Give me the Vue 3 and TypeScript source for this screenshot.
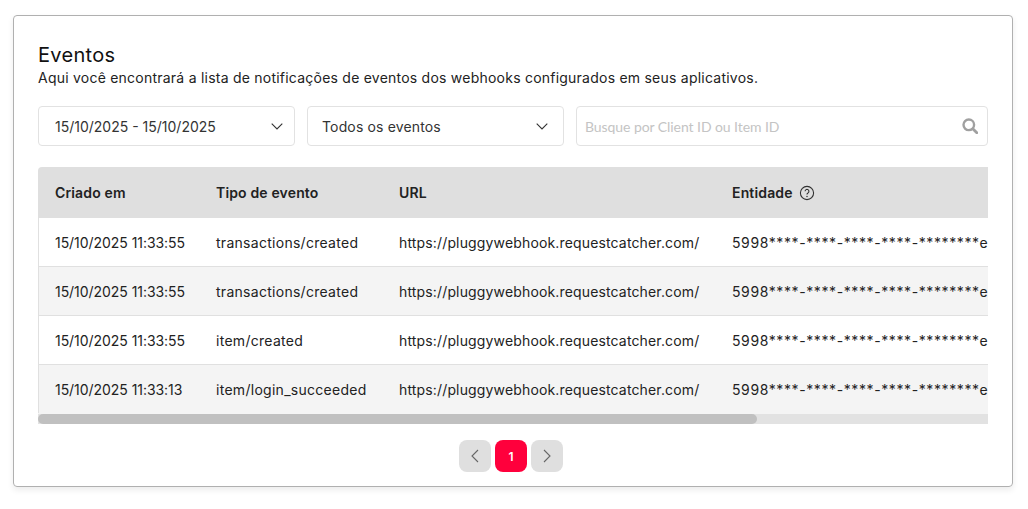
<script setup lang="ts">
interface Row { date: string; type: string }
const url = 'https://pluggywebhook.requestcatcher.com/'
const entity = '5998****-****-****-****-********e1a4'
const rows: Row[] = [
  { date: '15/10/2025 11:33:55', type: 'transactions/created' },
  { date: '15/10/2025 11:33:55', type: 'transactions/created' },
  { date: '15/10/2025 11:33:55', type: 'item/created' },
  { date: '15/10/2025 11:33:13', type: 'item/login_succeeded' },
]
</script>

<template>
  <div class="page">
    <section class="card">
      <h1 class="title">Eventos</h1>
      <p class="subtitle">Aqui você encontrará a lista de notificações de eventos dos webhooks configurados em seus aplicativos.</p>

      <div class="filters">
        <div class="select date">
          <span>15/10/2025 - 15/10/2025</span>
          <svg class="chev" viewBox="0 0 12 7" width="12" height="7"><path d="M.7.7 6 6l5.3-5.3" fill="none" stroke="#333" stroke-width="1.1" /></svg>
        </div>
        <div class="select events">
          <span>Todos os eventos</span>
          <svg class="chev" viewBox="0 0 12 7" width="12" height="7"><path d="M.7.7 6 6l5.3-5.3" fill="none" stroke="#333" stroke-width="1.1" /></svg>
        </div>
        <div class="search">
          <span class="placeholder">Busque por Client ID ou Item ID</span>
          <svg viewBox="0 0 16 16" width="16" height="16"><circle cx="6.8" cy="6.8" r="5.3" fill="none" stroke="#a0a0a0" stroke-width="2.4" /><path d="m10.8 10.8 4 4" stroke="#a0a0a0" stroke-width="2.8" stroke-linecap="round" /></svg>
        </div>
      </div>

      <div class="table-wrap">
        <div class="viewport">
          <div class="table">
            <div class="row head">
              <div>Criado em</div>
              <div>Tipo de evento</div>
              <div>URL</div>
              <div class="entity-head">
                Entidade
                <svg viewBox="0 0 16 16" width="16" height="16"><circle cx="8" cy="8" r="6.6" fill="none" stroke="#333" stroke-width="1.1" /><path d="M6.1 6.3a1.9 1.9 0 1 1 2.9 1.6c-.7.4-1 .8-1 1.5" fill="none" stroke="#333" stroke-width="1.1" /><circle cx="8" cy="11.5" r=".75" fill="#333" /></svg>
              </div>
            </div>
            <div v-for="(r, i) in rows" :key="i" class="row body" :class="{ odd: i % 2 === 1 }">
              <div class="date-cell">{{ r.date }}</div>
              <div class="type">{{ r.type }}</div>
              <div class="url">{{ url }}</div>
              <div class="entity">{{ entity }}</div>
            </div>
          </div>
        </div>
        <div class="track"><div class="thumb"></div></div>
      </div>

      <nav class="pager">
        <button class="pg" aria-label="Anterior"><svg viewBox="0 0 8 14" width="8" height="14"><path d="M7 1 1 7l6 6" fill="none" stroke="#666" stroke-width="1.1" /></svg></button>
        <button class="pg active">1</button>
        <button class="pg" aria-label="Próxima"><svg viewBox="0 0 8 14" width="8" height="14"><path d="m1 1 6 6-6 6" fill="none" stroke="#666" stroke-width="1.1" /></svg></button>
      </nav>
    </section>
  </div>
</template>

<style>
html, body { margin: 0; background: #fff; }
</style>

<style scoped>
.page {
  width: 1028px;
  height: 509px;
  box-sizing: border-box;
  padding: 15px 15px 0 13px;
  font-family: Inter, "Liberation Sans", sans-serif;
  color: #222;
  overflow: hidden;
}
.card {
  box-sizing: border-box;
  width: 1000px;
  height: 472px;
  border: 1px solid #b0b0b0;
  border-radius: 4px;
  box-shadow: 0 3px 6px rgba(0, 0, 0, .08);
  padding: 26px 24px 0;
}
.title {
  margin: 0;
  font-size: 20px;
  line-height: 26px;
  font-weight: 400;
  letter-spacing: .3px;
  color: #111;
}
.subtitle {
  margin: 1px 0 0;
  font-size: 14px;
  line-height: 18px;
  letter-spacing: .23px;
  white-space: nowrap;
  color: #222;
}
.filters {
  display: flex;
  gap: 12px;
  margin-top: 19px;
}
.select, .search {
  box-sizing: border-box;
  height: 40px;
  border: 1px solid #e2e2e2;
  border-radius: 4px;
  display: flex;
  align-items: center;
  justify-content: space-between;
  font-size: 14px;
  color: #333;
}
.select { width: 257px; padding: 0 11px 0 16px; }
.events { padding-left: 14px; padding-right: 15px; letter-spacing: .15px; }
.search { flex: 1; padding: 0 9px 0 8px; }
.placeholder {
  font-family: Lato, sans-serif;
  font-size: 14px;
  letter-spacing: -.07px;
  color: #c4c4c4;
}
.table-wrap {
  margin-top: 21px;
  width: 950px;
}
.viewport {
  overflow: hidden;
  border-radius: 4px 0 0 0;
}
.track {
  height: 10px;
  background: #e2e2e2;
}
.thumb {
  width: 719px;
  height: 10px;
  background: #c0c0c0;
  border-radius: 5px;
}
.table { width: 1255px; }
.row {
  display: grid;
  grid-template-columns: 161px 183px 333px 1fr;
  align-items: center;
  font-size: 14px;
  white-space: nowrap;
}
.row > div { padding-left: 17px; }
.head {
  height: 51px;
  background: #dfdfdf;
  font-weight: 600;
  letter-spacing: .15px;
  color: #222;
}
.entity-head { display: flex; align-items: center; gap: 6px; }
.body {
  box-sizing: border-box;
  height: 49px;
  background: #fff;
  border-bottom: 1px solid #e0e0e0;
  box-shadow: inset 1px 0 0 #e0e0e0;
  color: #222;
}
.date-cell { letter-spacing: -.05px; }
.type { letter-spacing: .28px; }
.url { letter-spacing: .15px; }
.entity { letter-spacing: .6px; }
.body.odd { background: #f4f4f4; }
.body:last-child { border-bottom-color: #f4f4f4; }
.pager {
  display: flex;
  justify-content: center;
  gap: 4px;
  margin-top: 16px;
  padding-right: 4px;
}
.pg {
  width: 32px;
  height: 32px;
  border: none;
  border-radius: 8px;
  background: #dfdfdf;
  padding: 0;
  display: flex;
  align-items: center;
  justify-content: center;
  font-family: inherit;
  font-size: 12px;
}
.pg.active { background: #ff003c; color: #fff; font-weight: 600; }
</style>
